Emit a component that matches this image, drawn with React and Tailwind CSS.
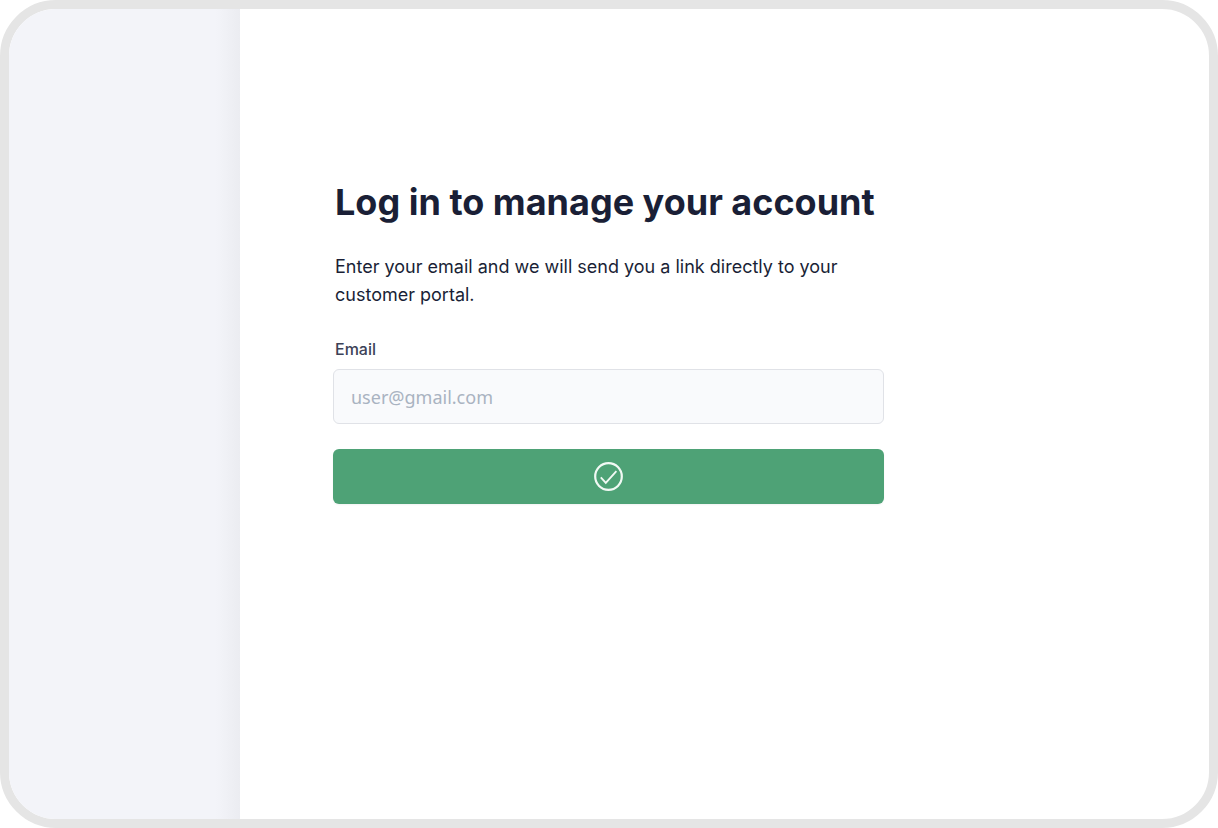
import { useState } from "react";

function CheckCircle() {
  return (
    <svg
      viewBox="0 0 30 30"
      className="size-[30px]"
      fill="none"
      stroke="#f1f9f4"
      aria-hidden="true"
    >
      <circle cx="14.5" cy="14.5" r="13.3" strokeWidth="2.2" />
      <path d="M6.8 15.4 L11.8 20.8 L22.4 9.2" strokeWidth="1.9" />
    </svg>
  );
}

export default function App() {
  const [email, setEmail] = useState("");

  return (
    <div className="flex min-h-screen overflow-hidden rounded-[56px] border-[9px] border-[#e5e5e5] bg-white font-['Inter',sans-serif] text-[#1a1f36]">
      <aside className="flex w-[231px] shrink-0 justify-end bg-[#f3f4f9]">
        <div className="w-6 bg-linear-to-r from-[#f3f4f9] to-[#ebecf1]" />
      </aside>
      <main className="flex-1 px-[93px] pt-[168px] pb-16">
        <form className="max-w-[551px]" onSubmit={(e) => e.preventDefault()}>
          <h1 className="pl-0.5 text-4xl leading-[50px] font-bold">
            Log in to manage your account
          </h1>
          <p className="mt-[26px] pl-0.5 text-[18px] leading-[28px]">
            Enter your email and we will send you a link directly to your
            customer portal.
          </p>
          <label
            htmlFor="email"
            className="mt-7 block pl-0.5 text-[16px] leading-6 font-medium text-[#3c4257]"
          >
            Email
          </label>
          <input
            id="email"
            type="email"
            value={email}
            onChange={(e) => setEmail(e.target.value)}
            placeholder="user@gmail.com"
            className="mt-2 block h-[55px] w-full rounded-md border border-[#e0e2e7] bg-[#f9fafc] px-[17px] font-['Noto_Sans',sans-serif] text-[18px] outline-none placeholder:text-[#a9b3c1]"
          />
          <button
            type="submit"
            aria-label="Link sent"
            className="mt-[25px] flex h-[55px] w-full items-center justify-center rounded-md bg-[#4ea276] shadow-xs"
          >
            <CheckCircle />
          </button>
        </form>
      </main>
    </div>
  );
}
